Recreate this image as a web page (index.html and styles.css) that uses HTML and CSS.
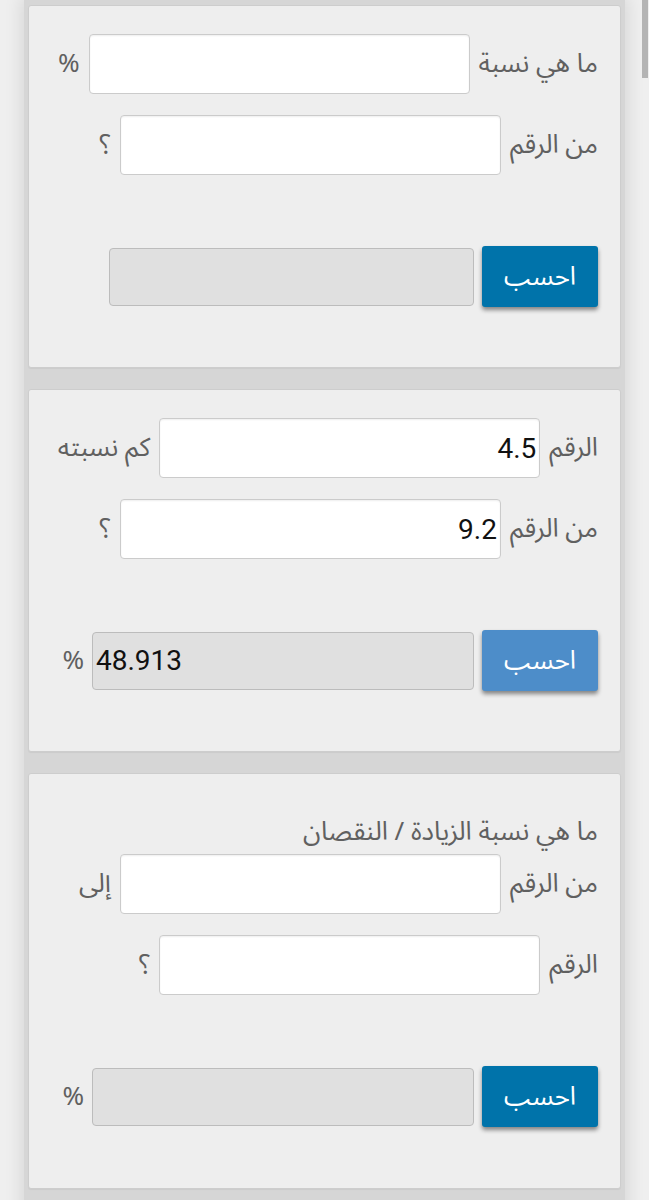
FILE: index.html
```html
<!DOCTYPE html>
<html lang="ar" dir="rtl">
<head>
<meta charset="utf-8">
<title>حاسبة النسبة المئوية</title>
<link rel="stylesheet" href="styles.css">
</head>
<body>
<div class="scroll-thumb"></div>
<main class="column">
  <section class="card">
    <div class="row">
      <label class="label">ما هي نسبة</label>
      <input class="field" type="text">
      <span class="suffix">%</span>
    </div>
    <div class="row">
      <label class="label">من الرقم</label>
      <input class="field" type="text">
      <span class="suffix">؟</span>
    </div>
    <div class="result">
      <button class="btn" type="button">احسب</button>
      <input class="output output--narrow" type="text" readonly>
    </div>
  </section>

  <section class="card">
    <div class="row">
      <label class="label">الرقم</label>
      <input class="field" type="text" value="4.5">
      <span class="suffix">كم نسبته</span>
    </div>
    <div class="row">
      <label class="label">من الرقم</label>
      <input class="field" type="text" value="9.2">
      <span class="suffix">؟</span>
    </div>
    <div class="result">
      <button class="btn btn--active" type="button">احسب</button>
      <input class="output" type="text" readonly value="48.913">
      <span class="suffix">%</span>
    </div>
  </section>

  <section class="card card--last">
    <h2 class="heading">ما هي نسبة الزيادة / النقصان</h2>
    <div class="row">
      <label class="label">من الرقم</label>
      <input class="field" type="text">
      <span class="suffix">إلى</span>
    </div>
    <div class="row">
      <label class="label">الرقم</label>
      <input class="field" type="text">
      <span class="suffix">؟</span>
    </div>
    <div class="result">
      <button class="btn" type="button">احسب</button>
      <input class="output" type="text" readonly>
      <span class="suffix">%</span>
    </div>
  </section>
</main>
</body>
</html>
```

FILE: styles.css
```css
html, body {
  margin: 0;
  padding: 0;
}

body {
  background: #efefef;
  font-family: "Noto Sans Arabic", "DejaVu Sans", sans-serif;
  color: #606060;
  width: 649px;
  height: 1200px;
  overflow: hidden;
  position: relative;
}

.scroll-thumb {
  position: absolute;
  top: 0;
  right: 1px;
  width: 6px;
  height: 78px;
  background: #b4b4b4;
}

.column {
  margin-left: 24px;
  margin-right: auto;
  width: 601px;
  padding: 5px 4px 10px;
  box-sizing: border-box;
  background: #d6d6d6;
  box-shadow: 0 0 16px 4px rgba(0, 0, 0, 0.09);
  min-height: 1200px;
}

.card {
  background: #eeeeee;
  border: 1px solid #cdcdcd;
  border-radius: 3px;
  padding: 28px 22px 60px;
  margin-bottom: 21px;
  display: flex;
  flex-direction: column;
  gap: 21px;
  box-shadow: 0 1px 1px rgba(0, 0, 0, 0.05);
}

.card--last {
  margin-top: 1px;
  padding-bottom: 61px;
}

.heading {
  margin: 13px 0 -16px;
  height: 34px;
  line-height: 34px;
  font-size: 26px;
  font-weight: normal;
  color: #606060;
}

.row {
  display: flex;
  align-items: center;
  gap: 9px;
  height: 60px;
}

.label {
  font-size: 26px;
  line-height: 34px;
  white-space: nowrap;
}

.suffix {
  font-size: 26px;
  line-height: 34px;
  white-space: nowrap;
}

.field {
  box-sizing: border-box;
  width: 381px;
  height: 60px;
  background: #ffffff;
  border: 1px solid #cbcbcb;
  border-radius: 4px;
  box-shadow: inset 0 1px 2px rgba(0, 0, 0, 0.07);
  padding: 0 3px;
  margin: 0;
  font-family: Roboto, "Liberation Sans", sans-serif;
  font-size: 28px;
  color: #111111;
  text-align: right;
  direction: rtl;
  outline: none;
}

.result {
  display: flex;
  align-items: center;
  gap: 8px;
  height: 61px;
  margin-top: 50px;
}

.btn {
  box-sizing: border-box;
  width: 116px;
  height: 61px;
  flex: none;
  border: none;
  border-radius: 3px;
  background: #0073aa;
  color: #ffffff;
  font-family: "Noto Sans Arabic", "DejaVu Sans", sans-serif;
  font-size: 26px;
  padding: 0;
  margin: 0;
  box-shadow: 0 3px 4px rgba(0, 0, 0, 0.45);
}

.btn--active {
  background: #4d8dc9;
}

.output {
  box-sizing: border-box;
  width: 382px;
  height: 58px;
  background: #e0e0e0;
  border: 1px solid #bcbcbc;
  border-radius: 4px;
  padding: 0 3px;
  margin: 0;
  font-family: Roboto, "Liberation Sans", sans-serif;
  font-size: 28px;
  color: #111111;
  direction: ltr;
  text-align: left;
  outline: none;
}

.output--narrow {
  width: 365px;
}
```
